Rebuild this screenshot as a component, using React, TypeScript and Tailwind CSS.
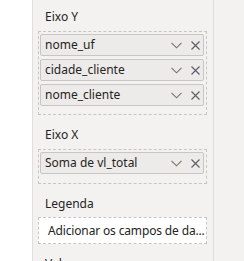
import React from "react";

const font = { fontFamily: '"Segoe UI", "Noto Sans", "Open Sans", sans-serif' };

function Chevron() {
  return (
    <svg width="11" height="7" viewBox="0 0 11 7" className="block">
      <polyline points="0.5,0.8 5.5,5.8 10.5,0.8" fill="none" stroke="#80705f" strokeWidth="1.1" />
    </svg>
  );
}

function Close() {
  return (
    <svg width="9" height="9" viewBox="0 0 9 9" className="block">
      <path d="M0.5 0.5 L8.5 8.5 M8.5 0.5 L0.5 8.5" fill="none" stroke="#5f5a66" strokeWidth="1.1" />
    </svg>
  );
}

function Item({ label }: { label: string }) {
  return (
    <div className="h-[22px] flex items-center rounded-[2px] border border-[#c8c6c4] bg-[#edebe9] pl-[4px] pr-[3px]">
      <span className="flex-1 truncate text-[12px] leading-[16px] text-[#252423]">{label}</span>
      <div className="flex items-center gap-[9px]">
        <Chevron />
        <Close />
      </div>
    </div>
  );
}

function Label({ text, className = "" }: { text: string; className?: string }) {
  return (
    <div className={"pl-[7px] text-[12px] leading-[16px] text-[#252423] " + className}>{text}</div>
  );
}

export default function App() {
  return (
    <div className="w-[244px] h-[261px] flex overflow-hidden bg-white" style={font}>
      <div className="w-[32px] shrink-0 bg-white" />
      <div className="w-[182px] shrink-0 border-l border-r border-[#e1dfdd] bg-[#f3f2f1] pl-[5px] pr-[6px] pt-[9px]">
        <Label text="Eixo Y" />
        <div className="mt-[6px] border border-dashed border-[#c8c6c4] pl-[1px] pr-[2px] pt-[2px] pb-[8px] flex flex-col gap-[3px]">
          <Item label="nome_uf" />
          <Item label="cidade_cliente" />
          <Item label="nome_cliente" />
        </div>
        <Label text="Eixo X" className="mt-[12px]" />
        <div className="mt-[6px] border border-dashed border-[#c8c6c4] pl-[1px] pr-[2px] pt-[2px] pb-[9px] flex flex-col gap-[3px]">
          <Item label="Soma de vl_total" />
        </div>
        <Label text="Legenda" className="mt-[12px]" />
        <div className="mt-[5px] h-[27px] border border-dashed border-[#c8c6c4] bg-white flex items-center pl-[9px] pr-[2px]">
          <span className="whitespace-nowrap text-[12px] leading-[16px] tracking-[-0.15px] text-[#252423]">Adicionar os campos de da...</span>
        </div>
        <Label text="Valores" className="mt-[12px]" />
      </div>
      <div className="flex-1 bg-[#f3f2f1]" />
    </div>
  );
}
